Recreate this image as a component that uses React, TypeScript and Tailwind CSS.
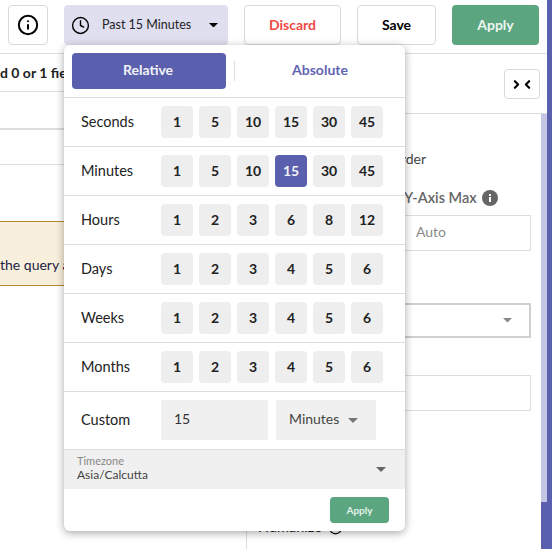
import { ChevronLeft, ChevronRight, Clock, Info } from "lucide-react";

const rows: { label: string; values: number[]; active?: number }[] = [
  { label: "Seconds", values: [1, 5, 10, 15, 30, 45] },
  { label: "Minutes", values: [1, 5, 10, 15, 30, 45], active: 15 },
  { label: "Hours", values: [1, 2, 3, 6, 8, 12] },
  { label: "Days", values: [1, 2, 3, 4, 5, 6] },
  { label: "Weeks", values: [1, 2, 3, 4, 5, 6] },
  { label: "Months", values: [1, 2, 3, 4, 5, 6] },
];

function Caret({ className }: { className: string }) {
  return (
    <svg viewBox="0 0 10 5" className={className}>
      <path d="M0 0h10L5 5z" fill="currentColor" />
    </svg>
  );
}

function TimePicker() {
  return (
    <div className="absolute left-[64px] top-[45px] z-10 flex h-[486px] w-[341px] flex-col rounded-md bg-white shadow-[0_2px_8px_rgba(0,0,0,0.35)]">
      <div className="flex h-[52px] shrink-0 items-center px-2">
        <button className="h-9 w-[154px] rounded bg-[#5a60ae] pb-0.5 pr-0.5 text-sm font-bold text-[#f1f1f8]">Relative</button>
        <div className="mx-2 h-5 w-px bg-[#dddddd]" />
        <button className="h-9 w-[154px] pb-0.5 text-sm font-bold text-[#5f65b2]">Absolute</button>
      </div>

      {rows.map((row) => (
        <div key={row.label} className="flex h-[49px] shrink-0 border-t border-[#dddddd] pl-[17px] pt-2">
          <span className="w-[80px] pt-[7px] text-[14.5px] leading-[18px] text-[#222222]">{row.label}</span>
          <div className="flex gap-1.5">
            {row.values.map((v) => (
              <button
                key={v}
                className={
                  v === row.active
                    ? "h-8 w-8 rounded bg-[#5a60ae] text-sm font-bold text-[#f1f1f8]"
                    : "h-8 w-8 rounded bg-[#eeeeee] text-sm font-bold text-[#222222]"
                }
              >
                {v}
              </button>
            ))}
          </div>
        </div>
      ))}

      <div className="flex h-[58px] shrink-0 border-t border-[#dddddd] pl-[17px] pt-2">
        <span className="w-[80px] pt-[11px] text-[14.5px] leading-[18px] text-[#222222]">Custom</span>
        <div className="h-10 w-[107px] bg-[#f0f0f0] pl-[13px] pt-[10px] text-sm leading-[18px] text-[#333333]">15</div>
        <div className="ml-2 flex h-10 w-[100px] items-center bg-[#f0f0f0] pb-0.5 pl-[13px] text-sm text-[#444444]">
          Minutes
          <Caret className="ml-[9px] mt-0.5 w-[10px] text-[#777777]" />
        </div>
      </div>

      <div className="flex h-10 shrink-0 items-center justify-between border-t border-[#dddddd] bg-[#f0f0f0] pl-[13px] pr-[19px]">
        <div className="flex flex-col pb-1">
          <span className="text-[11px] leading-[13px] text-[#888888]">Timezone</span>
          <span className="text-xs leading-[15px] text-[#444444]">Asia/Calcutta</span>
        </div>
        <Caret className="w-[10px] text-[#666666]" />
      </div>

      <div className="flex justify-end pr-4 pt-2">
        <button className="h-[26px] w-[59px] rounded bg-[#5ba680] text-[10px] font-bold text-[#e4f2ea]">Apply</button>
      </div>
    </div>
  );
}

function TopBar() {
  return (
    <div className="flex h-[54px] shrink-0 gap-4 border-b border-[#dddddd] pl-2 pt-[5px]">
      <button className="flex h-10 w-10 items-center justify-center rounded border border-[#d9d9d9]">
        <Info size={22} strokeWidth={2.2} className="text-black" />
      </button>
      <button className="flex h-10 w-[164px] items-center rounded bg-[#dfdff0] pl-[7px] text-[12.5px] text-[#222222]">
        <Clock size={19} strokeWidth={1.8} className="mr-[12px] text-black" />
        Past 15 Minutes
        <Caret className="ml-[18px] w-[9px] text-black" />
      </button>
      <button className="h-10 w-[97px] rounded border border-[#d9d9d9] text-sm font-bold text-[#f04a45]">Discard</button>
      <button className="h-10 w-[79px] rounded border border-[#d9d9d9] text-sm font-bold text-black">Save</button>
      <button className="h-10 w-[87px] rounded bg-[#5ba680] text-sm font-bold text-[#eef7f2]">Apply</button>
    </div>
  );
}

function LeftPane() {
  return (
    <div className="flex w-[246px] shrink-0 flex-col">
      <div className="flex h-[38px] items-center whitespace-nowrap border-b border-[#dddddd] text-sm font-bold text-[#222222]">
        d 0 or 1 field
      </div>
      <div className="h-[38px] border-b-2 border-[#dddddd]" />
      <div className="h-[35px] border-b border-[#dddddd]" />
      <div className="mt-[56px] flex h-[65px] items-end whitespace-nowrap border-y border-[#b8862b] bg-[#f8f0dc] pb-[10px] text-sm text-[#222244]">
        the query and
      </div>
    </div>
  );
}

function RightPane() {
  return (
    <div className="flex min-w-0 flex-1 flex-col border-l border-[#dddddd]">
      <div className="flex h-[60px] shrink-0 justify-end border-b border-[#dddddd] pr-[7px] pt-[15px]">
        <button className="flex h-[30px] w-9 items-center justify-center rounded border border-[#d9d9d9]">
          <ChevronRight size={13} strokeWidth={4} className="-mr-px text-black" />
          <ChevronLeft size={13} strokeWidth={4} className="-ml-px text-black" />
        </button>
      </div>
      <div className="flex flex-1">
        <div className="flex min-w-0 flex-1 flex-col pl-[11px] pr-[10px] text-sm text-[#444444]">
          <div className="mt-[35px] h-5 whitespace-nowrap pl-[126px] leading-5">Border</div>
          <div className="mt-[19px] flex gap-[10px]">
            <div className="w-[136px]" />
            <div className="flex-1">
              <div className="flex h-5 items-center gap-[5px] text-[14.5px] font-semibold leading-5 text-[#666666]">
                Y-Axis Max
                <svg viewBox="0 0 16 16" className="h-4 w-4">
                  <circle cx="8" cy="8" r="8" fill="#666666" />
                  <path d="M7 7h2v5H7zM7 4h2v2H7z" fill="#ffffff" />
                </svg>
              </div>
              <div className="mt-[7px] flex h-9 items-center border border-[#dddddd] pb-0.5 pl-[11px] text-[#8a8a8a]">Auto</div>
            </div>
          </div>
          <div className="mt-[52px] flex h-[35px] items-center justify-end border-2 border-[#cfcfcf] pr-[17px]">
            <Caret className="w-[9px] text-[#888888]" />
          </div>
          <div className="mt-[37px] h-9 border border-[#dddddd]" />
          <div className="mt-[106px] flex h-5 items-center gap-1.5 text-[14.5px] leading-5 text-[#222222]">
            Humanize
            <Info size={15} strokeWidth={2} className="text-black" />
          </div>
        </div>
        <div className="flex w-1.5 shrink-0 flex-col">
          <div className="h-[388px] bg-[#c5c6e3]" />
          <div className="flex-1 bg-[#5a60ae]" />
        </div>
      </div>
    </div>
  );
}

export default function App() {
  return (
    <div className="relative flex h-[549px] w-[552px] overflow-hidden bg-white font-[Lato,sans-serif]">
      <div className="flex min-w-0 flex-1 flex-col">
        <TopBar />
        <div className="flex min-h-0 flex-1">
          <LeftPane />
          <RightPane />
        </div>
      </div>
      <div className="w-[5px] shrink-0 bg-[#5a60ae]" />
      <TimePicker />
    </div>
  );
}
